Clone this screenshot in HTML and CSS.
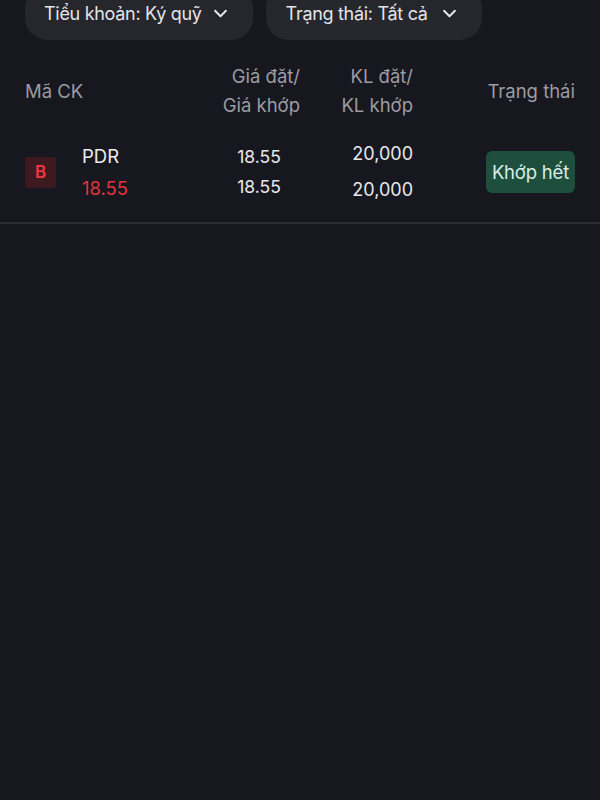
FILE: index.html
```html
<!DOCTYPE html>
<html lang="vi">
<head>
  <meta charset="UTF-8" />
  <meta name="viewport" content="width=device-width, initial-scale=1.0"/>
  <title>Sổ lệnh</title>
  <link rel="stylesheet" href="styles.css">
</head>
<body>
  <div class="filters">
    <button class="pill">
      <span>Tiểu khoản: Ký quỹ</span>
      <svg class="chev" viewBox="0 0 16 10" width="15" height="9"><path d="M2 2l6 6 6-6" fill="none" stroke="#e6e6ea" stroke-width="2.2" stroke-linecap="round" stroke-linejoin="round"/></svg>
    </button>
    <button class="pill">
      <span>Trạng thái: Tất cả</span>
      <svg class="chev" viewBox="0 0 16 10" width="15" height="9"><path d="M2 2l6 6 6-6" fill="none" stroke="#e6e6ea" stroke-width="2.2" stroke-linecap="round" stroke-linejoin="round"/></svg>
    </button>
  </div>

  <div class="table">
    <div class="row head">
      <div class="cell sym">Mã CK</div>
      <div class="cell price">Giá đặt/<br/>Giá khớp</div>
      <div class="cell qty">KL đặt/<br/>KL khớp</div>
      <div class="cell status">Trạng thái</div>
    </div>

    <div class="row order">
      <div class="cell sym">
        <span class="side buy">B</span>
        <div class="code">
          <span class="ticker">PDR</span>
          <span class="last">18.55</span>
        </div>
      </div>
      <div class="cell price">
        <span>18.55</span>
        <span>18.55</span>
      </div>
      <div class="cell qty">
        <span>20,000</span>
        <span>20,000</span>
      </div>
      <div class="cell status">
        <span class="tag filled">Khớp hết</span>
      </div>
    </div>
  </div>
</body>
</html>
```

FILE: styles.css
```css
* {
  box-sizing: border-box;
}

body {
  margin: 0;
  background: #17171f;
  color: #e8e8ec;
  font-family: Inter, "Noto Sans", sans-serif;
  font-size: 17px;
  height: 100vh;
  overflow: hidden;
}

.filters {
  display: flex;
  gap: 13px;
  padding: 0 25px;
  margin-top: -14px;
}

.pill {
  display: flex;
  align-items: center;
  gap: 10px;
  height: 54px;
  padding: 0 25px 0 19px;
  background: #26262d;
  border: none;
  border-radius: 22px;
  color: #e4e4e8;
  font-family: inherit;
  font-size: 18px;
  letter-spacing: -0.3px;
}

.pill:last-child {
  padding-left: 20px;
  gap: 13px;
}

.chev {
  margin-left: 1px;
}

.row {
  display: grid;
  grid-template-columns: 175px 100px 113px 162px;
  padding: 0 25px;
  align-items: center;
}

.head {
  height: 74px;
  margin-top: 14px;
  color: #9c9ca3;
  font-size: 18.5px;
  line-height: 29px;
}

.head .price,
.head .qty,
.head .status {
  text-align: right;
}

.order {
  height: 98px;
  margin-top: -2px;
  padding-bottom: 5px;
  border-bottom: 2px solid #2c2c33;
}

.order .sym {
  display: flex;
  align-items: center;
}

.side {
  width: 31px;
  height: 31px;
  display: flex;
  align-items: center;
  justify-content: center;
  border-radius: 2px;
  font-size: 17px;
  font-weight: 600;
  margin-top: 1px;
}

.side.buy {
  background: #3d1a20;
  color: #f03842;
}

.code {
  display: flex;
  flex-direction: column;
  margin-left: 26px;
  line-height: 32px;
  font-size: 18.5px;
}

.ticker {
  color: #ececf0;
}

.last {
  color: #e0343c;
}

.order .price {
  display: flex;
  flex-direction: column;
  align-items: center;
  padding-left: 18px;
  line-height: 30px;
  font-size: 17.5px;
}

.order .qty {
  display: flex;
  flex-direction: column;
  align-items: flex-end;
  line-height: 36px;
  font-size: 18px;
}

.order .status {
  display: flex;
  justify-content: flex-end;
}

.tag {
  display: inline-flex;
  align-items: center;
  height: 42px;
  padding: 0 6px;
  border-radius: 6px;
}

.tag.filled {
  background: #1e4e3d;
  color: #d8efe4;
  font-size: 18.5px;
  letter-spacing: -0.2px;
}
```
